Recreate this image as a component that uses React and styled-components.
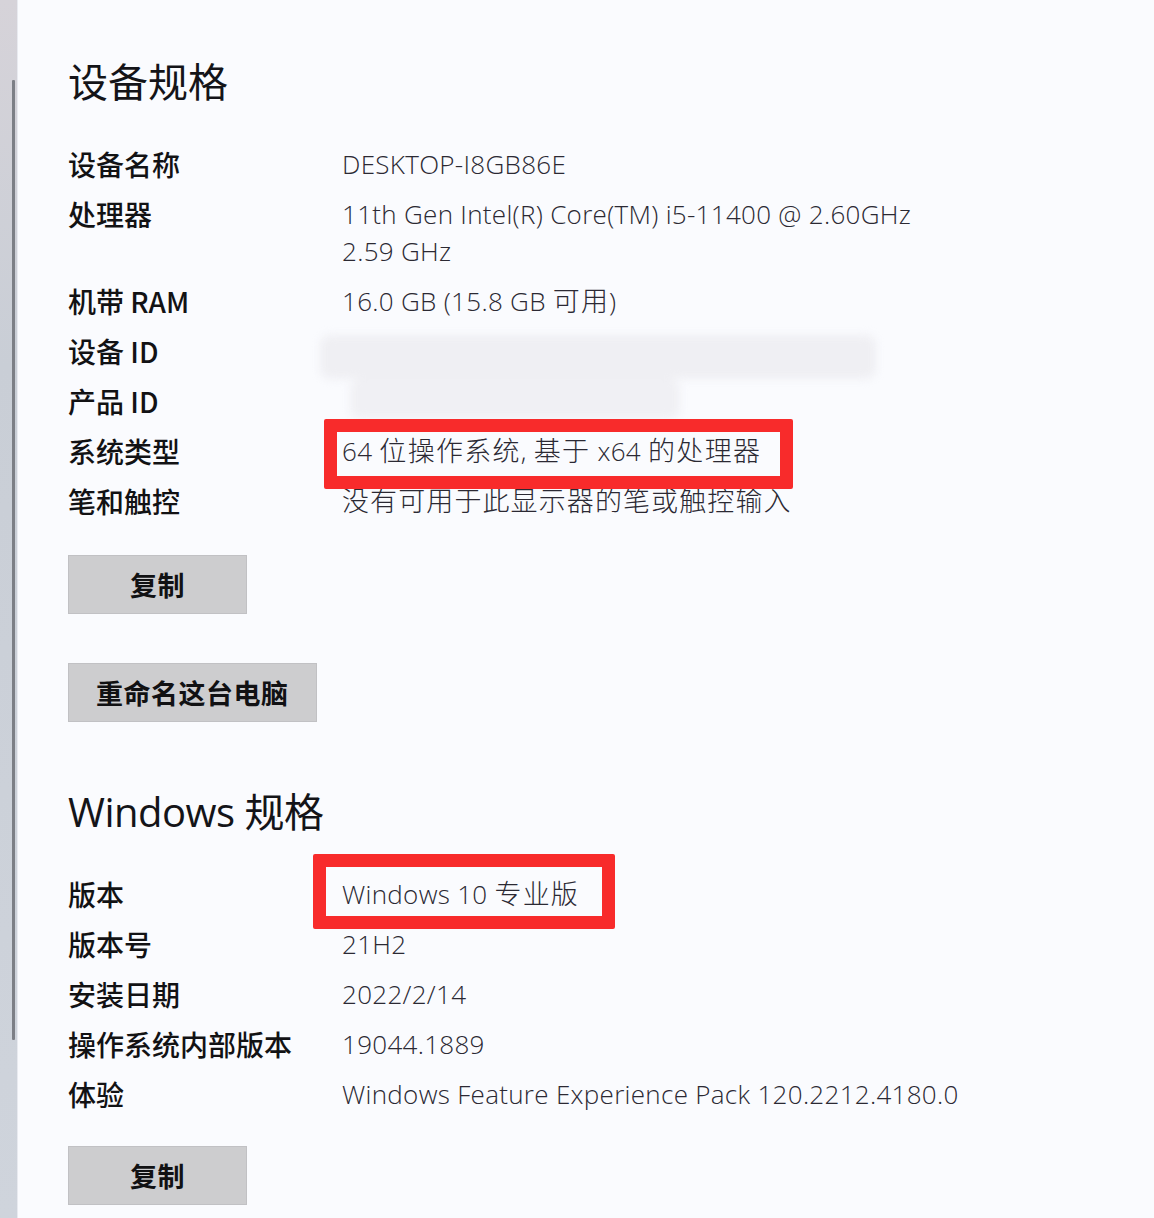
import React from "react";
import styled, { createGlobalStyle } from "styled-components";

const GlobalStyle = createGlobalStyle`
  html, body { margin: 0; padding: 0; background: #fafbfe; }
  *, *::before, *::after { box-sizing: border-box; }
`;

const CJK = `"Noto Sans CJK SC", "Noto Sans", sans-serif`;
const LATIN = `"Open Sans", "Noto Sans CJK SC", sans-serif`;

const Page = styled.div`
  display: flex;
  min-height: 1218px;
  background: #fafbfe;
`;

const ScrollRail = styled.div`
  width: 18px;
  flex: none;
  padding-top: 80px;
  padding-left: 12px;
  background: linear-gradient(180deg, #d6d3d9 0%, #c9ced6 30%, #cfd4dc 100%);
  border-right: 1px solid #e8eaf0;
`;

const ScrollThumb = styled.div`
  width: 3px;
  height: 960px;
  background: #7c7f86;
  border-radius: 1px;
`;

const Content = styled.main`
  flex: 1;
  padding: 54px 0 0 50px;
  display: flex;
  flex-direction: column;
  align-items: flex-start;
`;

const Heading = styled.h2`
  margin: ${(p) => p.$top || 0}px 0 0 0;
  font-family: "Open Sans", ${CJK};
  font-weight: 400;
  font-size: 40px;
  line-height: 56px;
  color: #141418;
  letter-spacing: ${(p) => p.$spacing || 0}px;
`;

const SpecGrid = styled.dl`
  margin: 36px 0 0 0;
  display: grid;
  grid-template-columns: 274px auto;
  grid-auto-rows: minmax(37px, auto);
  row-gap: 13px;
  line-height: 37px;
`;

const Label = styled.dt`
  margin: 0;
  font-family: ${CJK};
  font-weight: 500;
  font-size: 28px;
  color: #121214;
  white-space: nowrap;
`;

const Value = styled.dd`
  margin: 0;
  font-family: ${LATIN};
  font-weight: 300;
  font-size: 26px;
  letter-spacing: 0.3px;
  color: #2b2933;
  white-space: nowrap;
  grid-row: ${(p) => (p.$span ? `span ${p.$span}` : "auto")};
`;

const Han = styled.span`
  font-family: ${CJK};
  font-weight: 300;
  font-size: 27px;
  line-height: 1;
  letter-spacing: ${(p) => p.$ls ?? 1.1}px;
`;

const Marked = styled.span`
  position: relative;
  display: inline-block;
  &::after {
    content: "";
    position: absolute;
    left: ${(p) => p.$left}px;
    top: ${(p) => p.$top}px;
    width: ${(p) => p.$w}px;
    height: ${(p) => p.$h}px;
    border: 13px solid #f82b2b;
    border-radius: 2px;
    pointer-events: none;
  }
`;

const Redaction = styled.div`
  margin-left: -22px;
  height: 87px;
  display: flex;
  flex-direction: column;
  justify-content: center;
  filter: blur(4px);
`;

const Smudge = styled.div`
  height: ${(p) => p.$h}px;
  width: ${(p) => p.$w}px;
  margin-left: ${(p) => p.$x || 0}px;
  background: ${(p) => p.$c};
  border-radius: 10px;
`;

const Button = styled.button`
  margin-top: ${(p) => p.$top}px;
  min-width: 179px;
  height: 59px;
  padding: 0 27px;
  background: #cdcdcf;
  border: 1px solid #c1c1c4;
  border-radius: 0;
  font-family: ${CJK};
  font-weight: 700;
  font-size: 27px;
  color: #111113;
  letter-spacing: 0.5px;
`;

// wrap runs of Han characters so they get the wider CJK metrics
function Mixed({ text, ls }) {
  const parts = text.split(/([\u3400-\u9fff]+)/);
  return parts.map((part, i) =>
    /[\u3400-\u9fff]/.test(part) ? (
      <Han key={i} $ls={ls}>
        {part}
      </Han>
    ) : (
      <React.Fragment key={i}>{part}</React.Fragment>
    )
  );
}

const deviceRows = [
  ["设备名称", "DESKTOP-I8GB86E"],
  ["处理器", ["11th Gen Intel(R) Core(TM) i5-11400 @ 2.60GHz", "2.59 GHz"]],
  ["机带 RAM", "16.0 GB (15.8 GB 可用)"],
];

const windowsRows = [
  ["版本号", "21H2"],
  ["安装日期", "2022/2/14"],
  ["操作系统内部版本", "19044.1889"],
  ["体验", "Windows Feature Experience Pack 120.2212.4180.0"],
];

export default function App() {
  return (
    <Page>
      <GlobalStyle />
      <ScrollRail>
        <ScrollThumb />
      </ScrollRail>
      <Content>
        <Heading>设备规格</Heading>
        <SpecGrid>
          {deviceRows.map(([k, v]) => (
            <React.Fragment key={k}>
              <Label>{k}</Label>
              <Value>
                {Array.isArray(v)
                  ? v.map((line) => <div key={line}>{line}</div>)
                  : <Mixed text={v} />}
              </Value>
            </React.Fragment>
          ))}
          <Label>设备 ID</Label>
          <Value $span={2}>
            <Redaction>
              <Smudge $h={44} $w={556} $c="#efeff3" />
              <Smudge $h={40} $w={330} $x={30} $c="#f0f0f4" />
            </Redaction>
          </Value>
          <Label>产品 ID</Label>
          <Label>系统类型</Label>
          <Value>
            <Marked $left={-18} $top={-14} $w={469} $h={70}>
              <Mixed text="64 位操作系统, 基于 x64 的处理器" ls={1.3} />
            </Marked>
          </Value>
          <Label>笔和触控</Label>
          <Value>
            <Mixed text="没有可用于此显示器的笔或触控输入" />
          </Value>
        </SpecGrid>
        <Button $top={35}>复制</Button>
        <Button $top={49}>重命名这台电脑</Button>

        <Heading $top={62} $spacing={-0.5}>Windows 规格</Heading>
        <SpecGrid>
          <Label>版本</Label>
          <Value>
            <Marked $left={-29} $top={-22} $w={302} $h={75}>
              <Mixed text="Windows 10 专业版" />
            </Marked>
          </Value>
          {windowsRows.map(([k, v]) => (
            <React.Fragment key={k}>
              <Label>{k}</Label>
              <Value>{v}</Value>
            </React.Fragment>
          ))}
        </SpecGrid>
        <Button $top={33}>复制</Button>
      </Content>
    </Page>
  );
}
